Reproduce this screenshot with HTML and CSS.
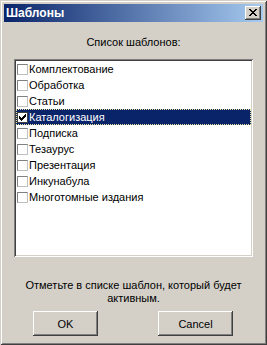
FILE: index.html
```html
<!DOCTYPE html>
<html lang="ru">
  <head>
    <meta charset="UTF-8" />
    <title>Шаблоны</title>
    <link rel="stylesheet" href="styles.css">
  </head>
  <body>
    <div class="window">
      <!-- Title bar -->
      <div class="titlebar">
        <span class="title">Шаблоны</span>
        <button class="close" type="button">
          <svg width="8" height="7" viewBox="0 0 8 7" shape-rendering="crispEdges">
            <path d="M0 0h2v1H0zM6 0h2v1H6zM1 1h2v1H1zM5 1h2v1H5zM2 2h4v1H2zM3 3h2v1H3zM2 4h4v1H2zM1 5h2v1H1zM5 5h2v1H5zM0 6h2v1H0zM6 6h2v1H6z" fill="#000"/>
          </svg>
        </button>
      </div>

      <div class="content">
        <p class="caption">Список шаблонов:</p>

        <!-- Template list -->
        <ul class="listbox">
          <li class="item"><span class="check"></span>Комплектование</li>
          <li class="item"><span class="check"></span>Обработка</li>
          <li class="item"><span class="check"></span>Статьи</li>
          <li class="item selected"><span class="check checked">
            <svg width="7" height="7" viewBox="0 0 7 7" shape-rendering="crispEdges">
              <path d="M6 0h1v3H6zM5 1h1v3H5zM4 2h1v3H4zM3 3h1v3H3zM2 4h1v3H2zM1 3h1v3H1zM0 2h1v3H0z" fill="#000"/>
            </svg>
          </span>Каталогизация</li>
          <li class="item"><span class="check"></span>Подписка</li>
          <li class="item"><span class="check"></span>Тезаурус</li>
          <li class="item"><span class="check"></span>Презентация</li>
          <li class="item"><span class="check"></span>Инкунабула</li>
          <li class="item"><span class="check"></span>Многотомные издания</li>
        </ul>

        <p class="hint">Отметьте в списке шаблон, который будет<br>активным.</p>

        <div class="buttons">
          <button class="btn btn-ok" type="button">OK</button>
          <button class="btn btn-cancel" type="button">Cancel</button>
        </div>
      </div>
    </div>
  </body>
</html>
```

FILE: styles.css
```css
/* Classic dialog look */
body {
  margin: 0;
  font-family: "Liberation Sans", Arial, sans-serif;
  font-size: 11px;
  color: #000;
  background-color: #d4d0c8;
}
.window {
  box-sizing: border-box;
  width: 267px;
  height: 345px;
  padding: 4px;
  background-color: #d4d0c8;
  box-shadow: inset 1px 1px 0 #d4d0c8, inset -1px -1px 0 #404040,
    inset 2px 2px 0 #fff, inset -2px -2px 0 #808080;
  display: flex;
  flex-direction: column;
}
.titlebar {
  height: 18px;
  display: flex;
  align-items: center;
  justify-content: space-between;
  padding: 0 2px 0 2px;
  background: linear-gradient(to right, #0a246a, #a6caf0);
}
.title {
  color: #fff;
  font-weight: bold;
  font-size: 12px;
}
.close {
  box-sizing: border-box;
  width: 16px;
  height: 14px;
  padding: 0 0 1px 0;
  border: none;
  background-color: #d4d0c8;
  box-shadow: inset -1px -1px 0 #404040, inset 1px 1px 0 #fff,
    inset -2px -2px 0 #808080;
  display: flex;
  align-items: center;
  justify-content: center;
}
.content {
  flex: 1;
  display: flex;
  flex-direction: column;
  padding: 0 10px 0 10px;
}
.caption {
  margin: 14px 0 0 0;
  line-height: 13px;
  text-align: center;
}
.listbox {
  list-style: none;
  box-sizing: border-box;
  height: 198px;
  margin: 10px 0 0 0;
  padding: 2px 2px 0 2px;
  background-color: #fff;
  box-shadow: inset 1px 1px 0 #808080, inset -1px -1px 0 #fff,
    inset 2px 2px 0 #404040, inset -2px -2px 0 #d4d0c8;
}
.item {
  box-sizing: border-box;
  height: 16px;
  display: flex;
  align-items: center;
  padding-left: 1px;
  line-height: 16px;
  white-space: nowrap;
}
.item.selected {
  background-color: #0a246a;
  color: #fff;
  outline: 1px dotted #f0e8a0;
  outline-offset: -1px;
}
.check {
  box-sizing: border-box;
  width: 11px;
  height: 11px;
  margin-right: 1px;
  background-color: #fff;
  border: 1px solid #808080;
  border-right-color: #c0c0c0;
  border-bottom-color: #c0c0c0;
  display: flex;
  align-items: center;
  justify-content: center;
}
.check.checked {
  border-color: #404040;
}
.hint {
  margin: 22px 0 0 0;
  line-height: 13px;
  text-align: center;
}
.buttons {
  display: flex;
  margin-top: 6px;
  padding-left: 19px;
  gap: 60px;
}
.btn {
  box-sizing: border-box;
  height: 25px;
  padding: 0;
  border: none;
  font-family: "Liberation Sans", Arial, sans-serif;
  font-size: 11px;
  color: #000;
  background-color: #d4d0c8;
  box-shadow: inset -1px -1px 0 #404040, inset 1px 1px 0 #fff,
    inset -2px -2px 0 #808080;
}
.btn-ok {
  width: 65px;
}
.btn-cancel {
  width: 75px;
}
```
